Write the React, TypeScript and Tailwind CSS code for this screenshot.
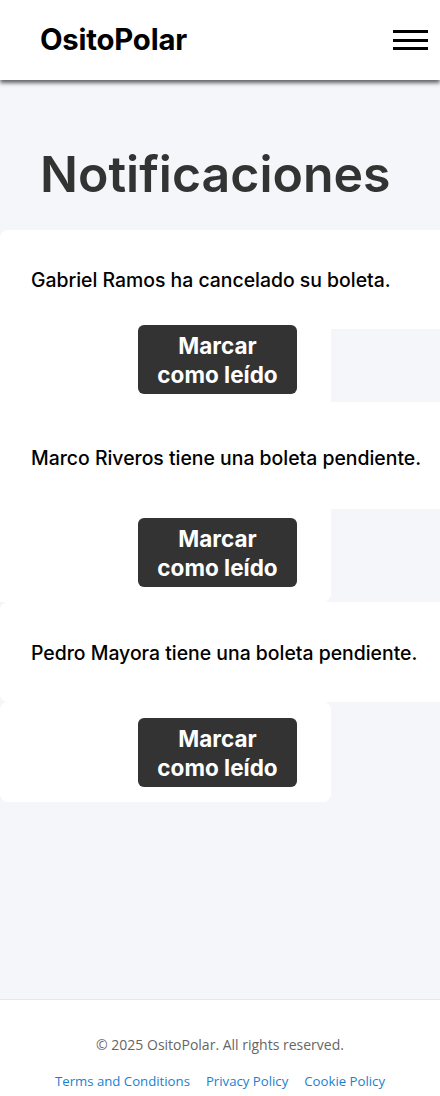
import React from "react";

type Card = {
  text: string;
  textH: string;
  textPad: string;
  textRound: string;
  btnBox: string;
  btnMt: string;
};

const cards: Card[] = [
  {
    text: "Gabriel Ramos ha cancelado su boleta.",
    textH: "h-[99px]",
    textPad: "pt-[2px]",
    textRound: "rounded-tl-lg",
    btnBox: "h-[73px]",
    btnMt: "-mt-[4px]",
  },
  {
    text: "Marco Riveros tiene una boleta pendiente.",
    textH: "h-[107px]",
    textPad: "pt-[6px]",
    textRound: "",
    btnBox: "h-[93px] rounded-br-lg",
    btnMt: "mt-[9px]",
  },
  {
    text: "Pedro Mayora tiene una boleta pendiente.",
    textH: "h-[100px]",
    textPad: "pt-[3px]",
    textRound: "rounded-l-lg",
    btnBox: "h-[100px] rounded-lg",
    btnMt: "mt-[16px]",
  },
];

export default function App() {
  return (
    <div className="min-h-[1096px] flex flex-col bg-[#f5f6fa] font-['Inter',sans-serif]">
      <header className="relative z-10 h-[80px] bg-white flex items-center justify-between pl-[40px] pr-[12px] shadow-[0_3px_4px_rgba(0,0,0,0.6)]">
        <span className="text-[29.3px] font-bold text-black tracking-[-0.2px]">OsitoPolar</span>
        <div className="flex flex-col gap-[5.5px] w-[35px]">
          <span className="block h-[3px] bg-black" />
          <span className="block h-[3px] bg-black" />
          <span className="block h-[3px] bg-black" />
        </div>
      </header>
      <main className="flex-1 pt-[57px]">
        <h1 className="pl-[40px] text-[50px] leading-[74px] font-semibold text-[#333] h-[93px]">
          Notificaciones
        </h1>
        <div className="flex flex-col">
          {cards.map((c, i) => (
            <div key={i} className="flex flex-col">
              <div className={`bg-white w-full flex items-center pl-[31px] ${c.textH} ${c.textPad} ${c.textRound}`}>
                <p className="text-[19.4px] font-medium text-black">{c.text}</p>
              </div>
              <div className={`bg-white w-[331px] ${c.btnBox}`}>
                <button
                  className={`ml-[138px] w-[159px] h-[69px] rounded-[6px] bg-[#333] text-white text-[22.5px] font-bold leading-[29px] ${c.btnMt}`}
                >
                  Marcar
                  <br />
                  como leído
                </button>
              </div>
            </div>
          ))}
        </div>
      </main>
      <footer className="h-[97px] bg-white border-t border-[#e5e7eb] flex flex-col items-center font-['Open_Sans',sans-serif]">
        <p className="mt-[34px] text-[14px] text-[#666]">© 2025 OsitoPolar. All rights reserved.</p>
        <div className="mt-[17px] flex gap-[16px] text-[13.2px] text-[#1a7fd0]">
          <a href="#">Terms and Conditions</a>
          <a href="#">Privacy Policy</a>
          <a href="#">Cookie Policy</a>
        </div>
      </footer>
    </div>
  );
}
